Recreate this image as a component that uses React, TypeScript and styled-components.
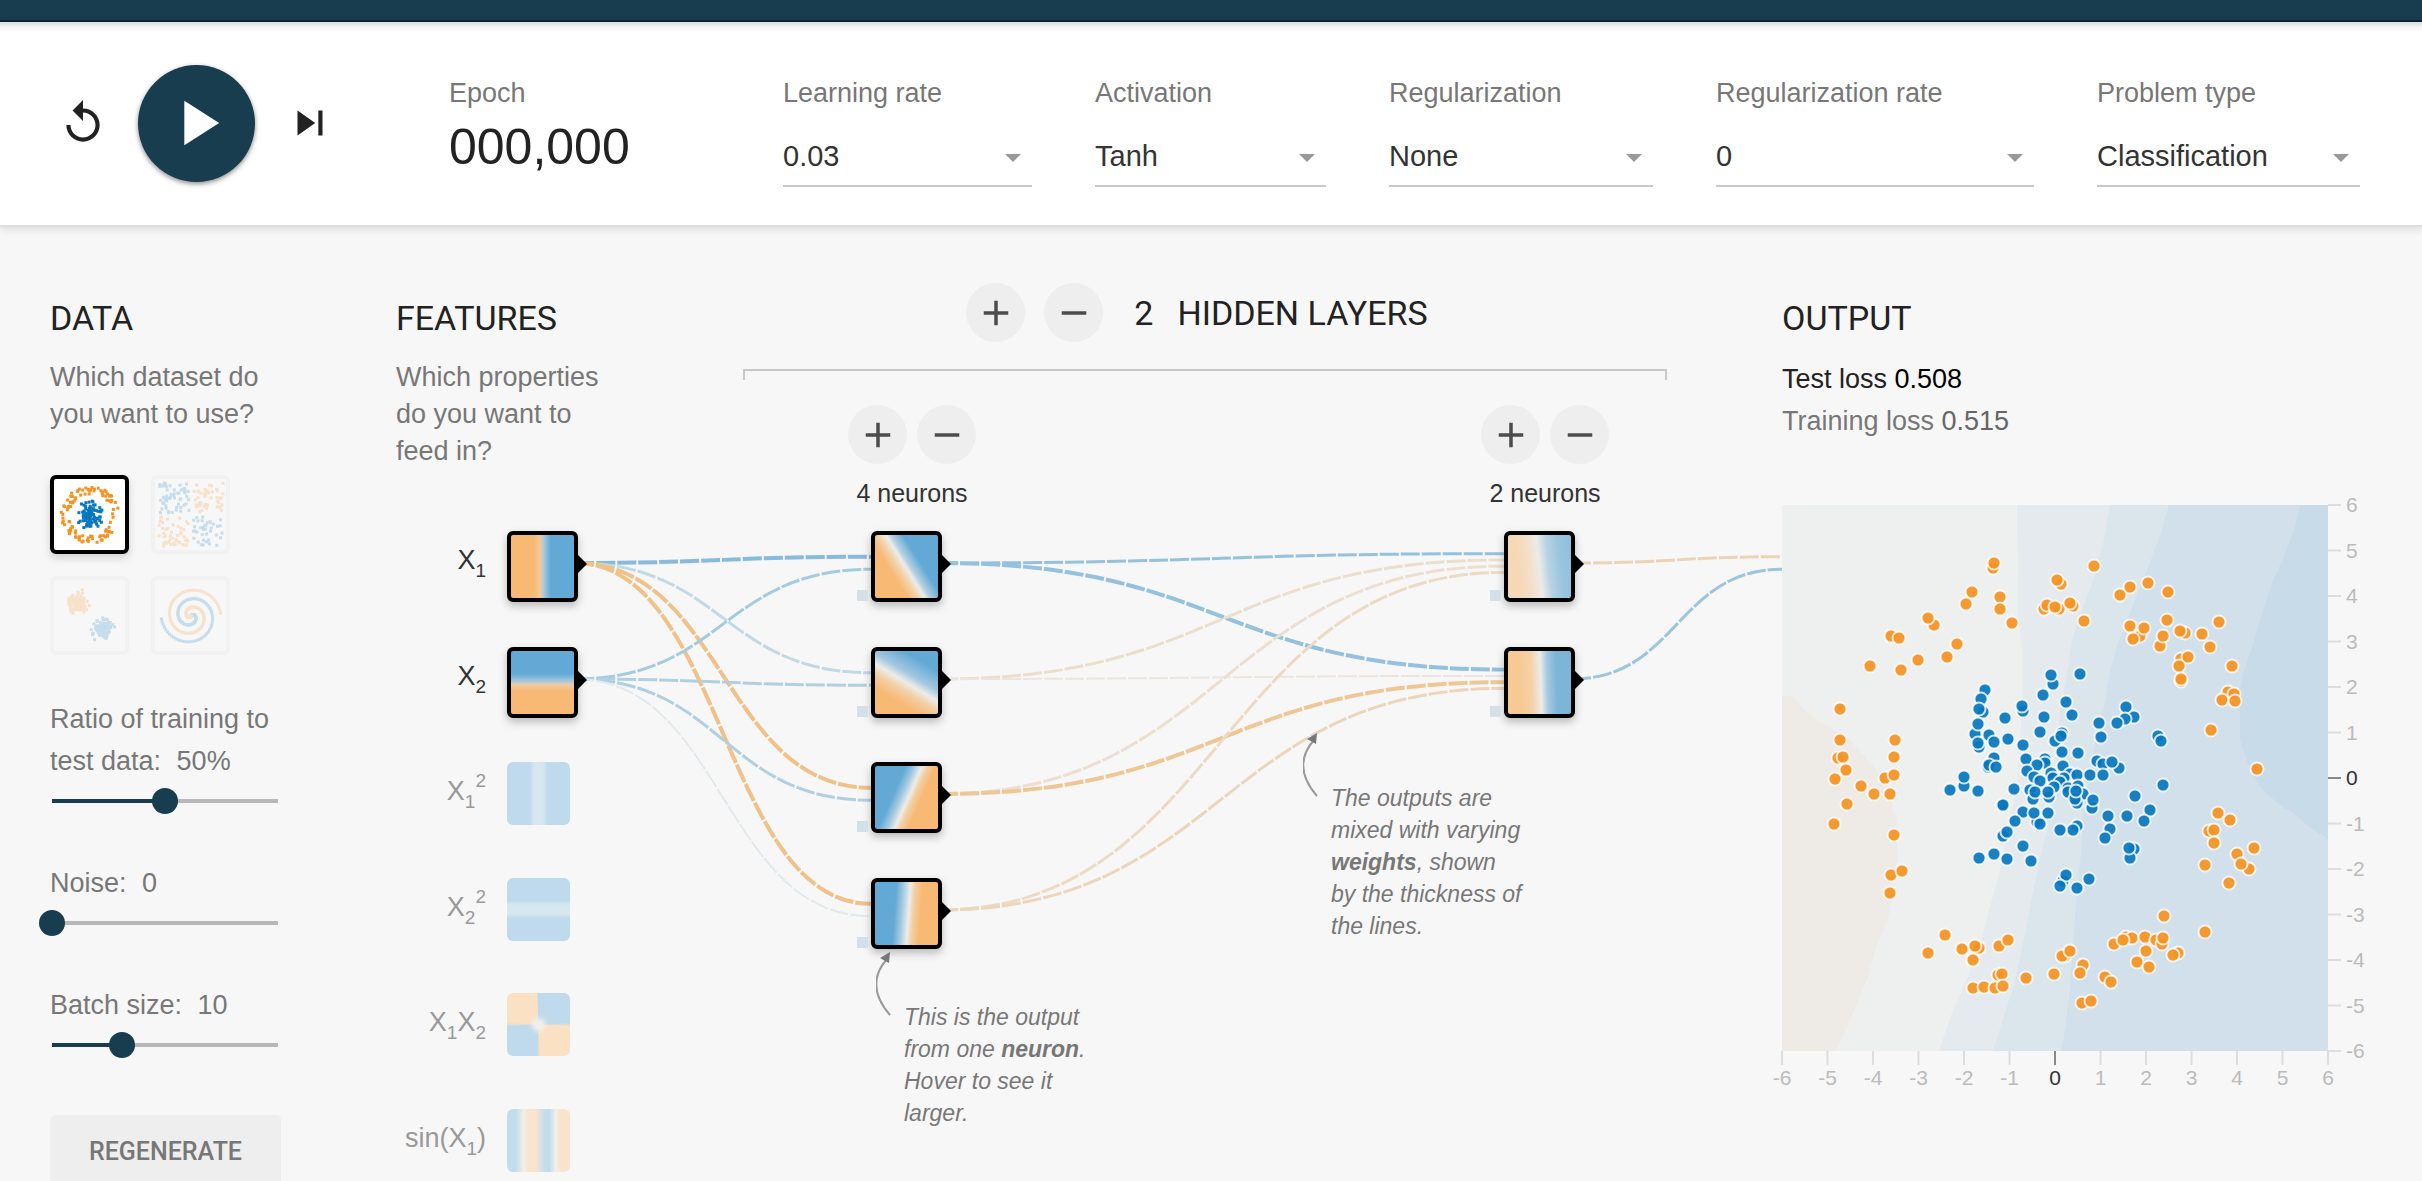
import React, { useLayoutEffect, useRef, useState } from "react";
import styled, { createGlobalStyle } from "styled-components";

const SANS = `"Liberation Sans", Arial, Helvetica, sans-serif`;
const ROBOTO = `Roboto, "Liberation Sans", sans-serif`;
const NAVY = "#183d4e";
const ORANGE = "#f7b974";
const BLUE = "#63a9d6";

const GlobalStyle = createGlobalStyle`
  *, *::before, *::after { box-sizing: border-box; }
  html, body { margin: 0; padding: 0; background: #f7f7f7; }
  body { font-family: ${SANS}; font-size: 27px; color: #222; }
  p, h2 { margin: 0; }
`;

const Page = styled.div`
  display: flex;
  flex-direction: column;
  height: 100vh;
  overflow: hidden;
`;

/* ---------- top bar and toolbar ---------- */

const TopBar = styled.header`
  flex: none;
  height: 22px;
  background: ${NAVY};
  border-bottom: 2px solid #0c2631;
`;

const Toolbar = styled.section`
  flex: none;
  position: relative;
  display: flex;
  align-items: flex-start;
  height: 205px;
  padding: 55px 62px 0 58px;
  background: linear-gradient(#dcdcdc, #f4f4f4 5px, #fff 10px);
  border-bottom: 2px solid #dddddd;
  box-shadow: 0 2px 8px rgba(0, 0, 0, 0.12);
`;

const Playback = styled.div`
  display: flex;
  align-items: center;
  gap: 30px;
  height: 92px;
`;

const IconButton = styled.button`
  display: flex;
  padding: 0;
  border: 0;
  background: none;
  color: #222;
`;

const PlayButton = styled(IconButton)`
  align-items: center;
  justify-content: center;
  width: 117px;
  height: 117px;
  border-radius: 50%;
  background: ${NAVY};
  color: #fff;
  box-shadow: 0 2px 5px rgba(0, 0, 0, 0.45);
`;

const Epoch = styled.div`
  display: flex;
  flex-direction: column;
  gap: 8px;
  width: 334px;
  margin-left: 114px;
`;

const FieldLabel = styled.label`
  color: #777;
  font-size: 27px;
  line-height: 32px;
  white-space: nowrap;
`;

const EpochValue = styled.output`
  font-size: 50px;
  line-height: 60px;
`;

const Fields = styled.div`
  flex: 1;
  display: grid;
  grid-template-columns: 249fr 231fr 264fr 318fr 263fr;
  column-gap: 63px;
`;

const Field = styled.div`
  display: flex;
  flex-direction: column;
  gap: 18px;
  min-width: 0;
`;

const SelectBox = styled.div`
  position: relative;
  border-bottom: 2px solid #c8c8c8;
`;

const Select = styled.select`
  display: block;
  width: 100%;
  height: 58px;
  padding: 0;
  border: 0;
  background: none;
  appearance: none;
  color: #333;
  font: 29px ${SANS};
`;

const Caret = styled.svg`
  position: absolute;
  top: 27px;
  right: 11px;
  pointer-events: none;
`;

/* ---------- page body ---------- */

const Main = styled.main`
  flex: 1;
  display: grid;
  grid-template-columns: 346px minmax(0, 1fr) 578px;
  padding: 56px 62px 0 50px;
`;

const Heading = styled.h2`
  font: 400 34px/40px ${ROBOTO};
  color: #222;
  text-transform: uppercase;
  white-space: nowrap;
`;

const Lead = styled.p`
  margin-top: 21px;
  color: #777;
  line-height: 37px;
`;

const DataColumn = styled.section`
  width: 231px;
  padding-top: 15px;
`;

const Datasets = styled.div`
  display: grid;
  grid-template-columns: 79px 79px;
  gap: 22px;
  margin: 42px 0 43px;
`;

const DatasetButton = styled.button<{ $active?: boolean }>`
  width: 79px;
  height: 79px;
  padding: 0;
  border: 4px solid ${(p) => (p.$active ? "#000" : "#f2f2f2")};
  border-radius: 6px;
  background: ${(p) => (p.$active ? "#fff" : "none")};
  box-shadow: ${(p) => (p.$active ? "0 4px 8px rgba(0, 0, 0, 0.15)" : "none")};

  svg {
    display: block;
    opacity: ${(p) => (p.$active ? 1 : 0.2)};
  }
`;

const SliderField = styled.div`
  display: flex;
  flex-direction: column;
  gap: 6px;
  margin-bottom: 48px;
`;

const SliderLabel = styled.label`
  color: #777;
  line-height: 42px;
`;

const SliderValue = styled.span`
  margin-left: 8px;
`;

const Range = styled.input<{ $fill: number }>`
  display: block;
  height: 26px;
  margin: 0 -10px 0 -11px;
  appearance: none;
  background: linear-gradient(
      to right,
      ${NAVY} ${(p) => p.$fill}%,
      #b8b8b8 ${(p) => p.$fill}%
    )
    center / calc(100% - 26px) 4px no-repeat;

  &::-webkit-slider-thumb {
    appearance: none;
    width: 26px;
    height: 26px;
    border-radius: 50%;
    background: ${NAVY};
  }
`;

const Regenerate = styled.button`
  width: 100%;
  height: 72px;
  margin-top: 9px;
  border: 0;
  border-radius: 5px;
  background: #eee;
  color: #777;
  font: 500 25px ${ROBOTO};
`;

/* ---------- network ---------- */

const NetworkColumn = styled.section`
  position: relative;
  display: flex;
  align-items: flex-start;
`;

const FeaturesIntro = styled.div`
  width: 220px;
  margin-right: 127px;
  padding-top: 15px;
`;

const HiddenIntro = styled.div`
  flex: 1;
  margin-right: 115px;
`;

const HiddenTitle = styled.div`
  display: flex;
  align-items: center;
  justify-content: center;
  padding-right: 16px;
  margin-bottom: 27px;
`;

const LayerCount = styled(Heading).attrs({ as: "span" })`
  margin: 0 24px 0 12px;
`;

const Bracket = styled.div`
  height: 11px;
  border: 2px solid #c8c8c8;
  border-bottom: 0;
`;

const RoundButton = styled.button`
  display: flex;
  align-items: center;
  justify-content: center;
  width: 59px;
  height: 59px;
  padding: 0;
  border: 0;
  border-radius: 50%;
  background: #eee;
  color: #4c4c4c;
`;

const TitleButton = styled(RoundButton)`
  margin-right: 19px;
`;

const Canvas = styled.div`
  position: absolute;
  inset: 0;
  pointer-events: none;

  button { pointer-events: auto; }
`;

const Links = styled.svg`
  position: absolute;
  inset: 0;
  width: 100%;
  height: 100%;
  overflow: visible;
`;

const Placed = styled.div`
  position: absolute;
`;

const FeatureItem = styled(Placed)<{ $active: boolean }>`
  left: 0;
  display: flex;
  gap: 21px;
  color: ${(p) => (p.$active ? "#333" : "#999")};
`;

const FeatureName = styled.span`
  width: 90px;
  line-height: 58px;
  text-align: right;
  white-space: nowrap;

  sub, sup { font-size: 19px; line-height: 0; }
  sub { vertical-align: -8px; }
  sup { vertical-align: 13px; }
`;

const Node = styled.button<{ $fill: string; $plain?: boolean }>`
  position: relative;
  flex: none;
  display: block;
  width: ${(p) => (p.$plain ? 63 : 71)}px;
  height: ${(p) => (p.$plain ? 63 : 71)}px;
  padding: 0;
  border: ${(p) => (p.$plain ? "0" : "4px solid #000")};
  border-radius: 6px;
  background: ${(p) => p.$fill};
  background-origin: padding-box;
  box-shadow: ${(p) => (p.$plain ? "none" : "0 4px 9px rgba(0, 0, 0, 0.25)")};
`;

const Arrow = styled.svg`
  position: absolute;
  top: 19px;
  left: 66px;
`;

const Bias = styled.span`
  position: absolute;
  top: 55px;
  left: -18px;
  width: 11px;
  height: 11px;
  background: #d3e0e7;
`;

const LayerControls = styled(Placed)`
  top: 122px;
  display: flex;
  flex-direction: column;
  align-items: center;
  width: 128px;
`;

const ButtonPair = styled.div`
  display: flex;
  gap: 10px;
`;

const NeuronCount = styled.span`
  margin-top: 14px;
  color: #333;
  font-size: 25px;
  line-height: 30px;
  white-space: nowrap;
`;

const Callout = styled(Placed)`
  display: flex;
`;

const CalloutText = styled.p`
  padding-top: 51px;
  color: #777;
  font-size: 23px;
  font-style: italic;
  line-height: 32px;
  white-space: nowrap;
`;

/* ---------- output ---------- */

const OutputColumn = styled.section`
  padding-top: 15px;
`;

const Losses = styled.div`
  margin: 20px 0 63px;
  line-height: 42px;
`;

const Loss = styled.p<{ $muted?: boolean }>`
  color: ${(p) => (p.$muted ? "#777" : "#222")};

  output { color: ${(p) => (p.$muted ? "#666" : "#000")}; }
`;

const Plot = styled.svg`
  display: block;
  overflow: visible;
  font-size: 21px;
`;

/* ---------- icons ---------- */

function Icon({ d, size }: { d: string; size: number }) {
  return (
    <svg width={size} height={size} viewBox="0 0 24 24" fill="currentColor" aria-hidden>
      <path d={d} />
    </svg>
  );
}

const REPLAY =
  "M12 5V1L7 6l5 5V7c3.31 0 6 2.69 6 6s-2.69 6-6 6-6-2.69-6-6H4c0 4.42 3.58 8 8 8s8-3.58 8-8-3.58-8-8-8z";
const PLAY = "M8 5v14l11-7z";
const SKIP = "M6 18l8.5-6L6 6v12zM16 6v12h2V6h-2z";
const ADD = "M19 13h-6v6h-2v-6H5v-2h6V5h2v6h6v2z";
const REMOVE = "M19 13H5v-2h14v2z";

/* ---------- dataset thumbnails ---------- */

type Dot = [number, number, string];
const DOT_BLUE = "#0877bd";
const DOT_ORANGE = "#f59322";

function seeded(seed: number) {
  let s = seed;
  return () => {
    s = (s * 16807) % 2147483647;
    return s / 2147483647;
  };
}

function circleDots(): Dot[] {
  const rnd = seeded(11);
  const dots: Dot[] = [];
  for (let i = 0; i < 100; i++) {
    const a = rnd() * Math.PI * 2;
    const r = rnd() * 14;
    dots.push([36 + r * Math.sin(a), 36 + r * Math.cos(a), DOT_BLUE]);
  }
  for (let i = 0; i < 100; i++) {
    const a = rnd() * Math.PI * 2;
    const r = 21 + rnd() * 8;
    dots.push([36 + r * Math.sin(a), 36 + r * Math.cos(a), DOT_ORANGE]);
  }
  return dots;
}

function xorDots(): Dot[] {
  const rnd = seeded(29);
  return Array.from({ length: 190 }, () => {
    const x = (rnd() - 0.5) * 60;
    const y = (rnd() - 0.5) * 60;
    const px = x + (x > 0 ? 2 : -2);
    const py = y + (y > 0 ? 2 : -2);
    return [36 + px, 36 + py, x * y > 0 ? DOT_BLUE : DOT_ORANGE] as Dot;
  });
}

function gaussDots(): Dot[] {
  const rnd = seeded(5);
  const spread = () => (rnd() + rnd() + rnd() - 1.5) * 10;
  const dots: Dot[] = [];
  for (let i = 0; i < 95; i++) dots.push([24 + spread(), 24 + spread(), DOT_ORANGE]);
  for (let i = 0; i < 95; i++) dots.push([49 + spread(), 48 + spread(), DOT_BLUE]);
  return dots;
}

function spiralDots(): Dot[] {
  const dots: Dot[] = [];
  [
    [0, DOT_BLUE],
    [Math.PI, DOT_ORANGE],
  ].forEach(([delta, color]) => {
    for (let i = 0; i < 110; i++) {
      const r = (i / 110) * 30;
      const t = 1.75 * (i / 110) * 2 * Math.PI + (delta as number);
      dots.push([36 + r * Math.sin(t), 36 - r * Math.cos(t), color as string]);
    }
  });
  return dots;
}

const DATASETS = [
  { name: "Circle", dots: circleDots(), active: true },
  { name: "Exclusive or", dots: xorDots(), active: false },
  { name: "Gaussian", dots: gaussDots(), active: false },
  { name: "Spiral", dots: spiralDots(), active: false },
];

function DatasetThumb({ dots }: { dots: Dot[] }) {
  return (
    <svg width="71" height="71" viewBox="0 0 71 71" aria-hidden>
      {dots.map(([x, y, c], i) => (
        <rect key={i} x={x - 1.5} y={y - 1.5} width="3" height="3" fill={c} />
      ))}
    </svg>
  );
}

/* ---------- network model ---------- */

const ROWS = [248, 364, 479, 595, 710, 826];

const FEATURES = [
  {
    name: <>X<sub>1</sub></>,
    label: "X1",
    active: true,
    fill: `linear-gradient(90deg, ${ORANGE} 36%, #f2c998 46%, #a9c8dc 52%, ${BLUE} 63%)`,
  },
  {
    name: <>X<sub>2</sub></>,
    label: "X2",
    active: true,
    fill: `linear-gradient(180deg, ${BLUE} 36%, #a5c8de 48%, #f0cba0 53%, ${ORANGE} 64%)`,
  },
  {
    name: <>X<sub>1</sub><sup>2</sup></>,
    label: "X1 squared",
    active: false,
    fill: "linear-gradient(90deg, #bfdaec 36%, #d6e7ef 43%, #d6e7ef 57%, #bfdaec 64%)",
  },
  {
    name: <>X<sub>2</sub><sup>2</sup></>,
    label: "X2 squared",
    active: false,
    fill: "linear-gradient(180deg, #bfdaec 36%, #d6e7ef 43%, #d6e7ef 57%, #bfdaec 64%)",
  },
  {
    name: <>X<sub>1</sub>X<sub>2</sub></>,
    label: "X1 times X2",
    active: false,
    fill:
      "radial-gradient(circle, #f0efec 3px, rgba(240,239,236,0) 10px), conic-gradient(#bfdaec 24%, #fae1c4 26%, #fae1c4 49%, #bfdaec 51%, #bfdaec 74%, #fae1c4 76%, #fae1c4 99%, #bfdaec)",
  },
  {
    name: <>sin(X<sub>1</sub>)</>,
    label: "sine of X1",
    active: false,
    fill:
      "linear-gradient(90deg, #c3dcec 14%, #f1eeea 26%, #f9e3ca 34%, #f7e4d0 46%, #c8deea 58%, #c1dbec 67%, #f1eeea 77%, #f9e3ca 86%)",
  },
];

const HIDDEN = [
  [
    `linear-gradient(58deg, ${ORANGE} 32%, #f3d3ac 42%, #ececea 49%, #b4d0e2 54%, ${BLUE} 66%)`,
    `linear-gradient(31deg, ${ORANGE} 26%, #f2cfa4 40%, #ececea 50%, #a3c8df 60%, ${BLUE} 80%)`,
    `linear-gradient(114deg, ${BLUE} 34%, #a6cae0 44%, #ececea 52%, #f3cfa2 58%, ${ORANGE} 67%)`,
    `linear-gradient(94deg, ${BLUE} 32%, #a6cae0 43%, #ececea 53%, #f3cfa2 60%, ${ORANGE} 71%)`,
  ],
  [
    "linear-gradient(84deg, #f5d8b8 20%, #f3dfc9 36%, #ecebe9 50%, #b9d3e3 63%, #9ac5df 80%, #8fbfdd 100%)",
    "linear-gradient(88deg, #f7c995 20%, #f5d2a8 38%, #ecebe9 52%, #a5cae0 62%, #7db5d9 76%)",
  ],
];

type Link = [number, number, string, number];

const LINKS: Link[][] = [
  [
    [0, 0, "#88badb", 4],
    [0, 1, "#c1d8e5", 3],
    [0, 2, "#f0c188", 4],
    [0, 3, "#f0c188", 4],
    [1, 0, "#a5cbe0", 3],
    [1, 1, "#b0d0e2", 3],
    [1, 2, "#b0d0e2", 3],
    [1, 3, "#e2e9ec", 2],
  ],
  [
    [0, 0, "#94c1dd", 3],
    [0, 1, "#94c1dd", 4],
    [1, 0, "#ebdecd", 3],
    [1, 1, "#ebe5de", 2],
    [2, 0, "#ecdfd0", 3],
    [2, 1, "#efc795", 4],
    [3, 0, "#ecdac3", 3],
    [3, 1, "#ecd6bb", 3],
  ],
  [
    [0, 0, "#ecd3b5", 3],
    [1, 0, "#9dc5de", 3],
  ],
];

const SOURCES = [2, 4, 2];

function linkPath(x1: number, x2: number, from: number, to: number, count: number) {
  const start = x1 + 68;
  const mid = (start + x2) / 2;
  const y1 = ROWS[from] + 32;
  const y2 = ROWS[to] + 32 + ((from - (count - 1) / 2) / count) * 25;
  return `M${start},${y1}C${mid},${y1} ${mid},${y2} ${x2},${y2}`;
}

function NodeArrow() {
  return (
    <Arrow width="10" height="20" viewBox="0 0 10 20" aria-hidden>
      <path d="M0 0L10 10L0 20z" />
    </Arrow>
  );
}

function CalloutArrow() {
  return (
    <svg width="28" height="72" viewBox="0 0 28 72" aria-hidden>
      <path d="M14 65Q-12 35 11 9" fill="none" stroke="#999" strokeWidth="2" />
      <path d="M14 2L4 8L13 13z" fill="#777" />
    </svg>
  );
}

function Network() {
  const ref = useRef<HTMLDivElement>(null);
  const [width, setWidth] = useState(1386);

  useLayoutEffect(() => {
    const measure = () => ref.current && setWidth(ref.current.clientWidth);
    measure();
    window.addEventListener("resize", measure);
    return () => window.removeEventListener("resize", measure);
  }, []);

  const first = 111;
  const span = width - first;
  const xs = [first, Math.round(first + span * 0.2855), Math.round(first + span * 0.782), width];

  return (
    <Canvas ref={ref}>
      <Links aria-hidden>
        {LINKS.map((group, layer) =>
          group.map(([from, to, color, w]) => (
            <path
              key={`${layer}-${from}-${to}`}
              d={linkPath(xs[layer], xs[layer + 1], from, to, SOURCES[layer])}
              fill="none"
              stroke={color}
              strokeWidth={w}
              strokeDasharray="19 2"
            />
          ))
        )}
      </Links>

      {FEATURES.map((f, i) => (
        <FeatureItem key={f.label} $active={f.active} style={{ top: ROWS[i] }}>
          <FeatureName>{f.name}</FeatureName>
          <Node $fill={f.fill} $plain={!f.active} aria-label={f.label}>
            {f.active && <NodeArrow />}
          </Node>
        </FeatureItem>
      ))}

      {HIDDEN.map((layer, l) => (
        <React.Fragment key={l}>
          <LayerControls style={{ left: xs[l + 1] - 23 }}>
            <ButtonPair>
              <RoundButton aria-label="Add neuron"><Icon d={ADD} size={42} /></RoundButton>
              <RoundButton aria-label="Remove neuron"><Icon d={REMOVE} size={42} /></RoundButton>
            </ButtonPair>
            <NeuronCount>{`${layer.length} neurons`}</NeuronCount>
          </LayerControls>
          {layer.map((fill, i) => (
            <Placed key={i} style={{ left: xs[l + 1], top: ROWS[i] }}>
              <Node $fill={fill} aria-label={`Layer ${l + 1} neuron ${i + 1}`}>
                <Bias />
                <NodeArrow />
              </Node>
            </Placed>
          ))}
        </React.Fragment>
      ))}

      <Callout style={{ left: xs[2] - 201, top: 448 }}>
        <CalloutArrow />
        <CalloutText>
          The outputs are<br />mixed with varying<br /><b>weights</b>, shown<br />
          by the thickness of<br />the lines.
        </CalloutText>
      </Callout>
      <Callout style={{ left: xs[1] + 5, top: 667 }}>
        <CalloutArrow />
        <CalloutText>
          This is the output<br />from one <b>neuron</b>.<br />Hover to see it<br />larger.
        </CalloutText>
      </Callout>
    </Canvas>
  );
}

/* ---------- output plot ---------- */

const BANDS: [string, string][] = [
  ["#edf0ef", "0,0 546,0 546,546 0,546"],
  [
    "#eeeae6",
    "0,190 11,192 22,205 46,222 66,233 79,248 92,262 100,275 110,288 111,305 115,315 115,355 110,392 105,418 94,442 86,472 75,498 65,522 54,546 0,546",
  ],
  [
    "#e5eaee",
    "235,0 236,108 240,142 240,208 236,258 235,282 227,315 222,345 217,370 206,408 200,432 185,475 170,508 157,546 546,546 546,0",
  ],
  [
    "#dbe6ec",
    "328,0 322,35 312,72 299,108 290,135 284,175 278,208 274,258 270,295 265,325 257,358 250,392 244,425 233,475 223,508 211,546 546,546 546,0",
  ],
  [
    "#d2e0eb",
    "387,0 379,28 366,62 350,102 337,135 328,165 322,202 312,242 307,275 301,308 299,348 294,398 291,442 287,492 283,525 279,546 546,546 546,0",
  ],
  [
    "#c8dbe9",
    "518,0 514,18 502,52 491,75 480,108 470,142 461,168 458,188 458,235 468,265 480,285 502,303 510,307 527,322 546,334 546,0",
  ],
];

const ORANGE_POINTS = [
  211,63, 212,58, 312,61, 279,79, 275,75, 190,87, 218,92, 184,99, 218,104, 262,104, 265,100, 277,104,
  273,102, 291,101, 288,98, 230,118, 302,116, 338,90, 348,82, 366,78, 386,87, 152,120, 146,113, 109,131,
  117,133, 175,139, 165,152, 136,155, 88,161, 119,165, 348,121, 358,131, 362,123, 351,134, 378,141,
  381,131, 385,115, 403,128, 398,126, 420,129, 437,117, 428,142, 399,154, 406,152, 397,161, 399,176,
  399,174, 450,161, 446,187, 452,189, 440,195, 453,196, 429,225, 475,264, 58,204, 58,235, 113,235,
  56,253, 61,252, 112,252, 64,265, 53,274, 103,273, 112,270, 79,281, 92,289, 108,289, 65,299, 52,319,
  112,330, 109,370, 120,366, 108,388, 436,308, 448,315, 427,326, 432,325, 432,338, 472,343, 455,349,
  467,364, 459,359, 423,360, 447,378, 382,411, 423,427, 344,432, 350,433, 332,439, 341,435, 363,432,
  374,435, 380,439, 381,433, 364,446, 396,448, 391,450, 355,457, 367,462, 163,430, 146,448, 180,444,
  197,443, 193,441, 191,455, 217,441, 226,435, 283,451, 280,451, 288,446, 301,460, 298,468, 272,469,
  244,473, 216,470, 220,469, 191,483, 202,482, 213,483, 221,481, 323,472, 329,477, 300,498, 309,496,
];

const BLUE_POINTS = [
  271,179, 269,170, 298,169, 203,185, 261,190, 199,194, 284,197, 241,206, 240,201, 344,202, 201,207,
  197,204, 290,210, 352,212, 262,212, 223,213, 343,214, 335,218, 317,218, 193,229, 196,219, 258,227,
  207,230, 280,228, 273,236, 279,231, 319,232, 376,231, 379,236, 226,234, 212,237, 197,242, 196,238,
  241,240, 280,247, 296,248, 244,254, 212,253, 263,254, 315,256, 321,259, 337,263, 330,257, 263,258,
  255,260, 206,262, 207,260, 214,262, 281,261, 245,266, 269,268, 288,269, 295,270, 308,270, 321,270,
  182,281, 182,272, 252,272, 282,273, 271,273, 258,276, 278,277, 168,285, 196,286, 232,284, 248,285,
  251,294, 253,287, 272,282, 267,292, 266,287, 286,283, 286,287, 296,281, 301,289, 295,298, 293,294,
  294,286, 310,303, 311,295, 381,280, 353,291, 220,300, 221,300, 368,305, 362,316, 345,311, 326,311,
  241,307, 255,317, 252,308, 266,308, 233,316, 258,319, 295,321, 291,325, 278,325, 328,324, 323,333,
  221,331, 225,327, 241,341, 352,344, 348,353, 347,343, 212,349, 225,354, 197,353, 249,356, 281,376,
  284,370, 278,381, 295,383, 307,374,
];

const TICKS = [-6, -5, -4, -3, -2, -1, 0, 1, 2, 3, 4, 5, 6];

function pairs(flat: number[]) {
  return flat.reduce<[number, number][]>((out, v, i) => {
    if (i % 2 === 0) out.push([v, flat[i + 1]]);
    return out;
  }, []);
}

function Dots({ points, color }: { points: number[]; color: string }) {
  return (
    <g fill={color} fillOpacity="0.92" stroke="#fff" strokeOpacity="0.8" strokeWidth="2">
      {pairs(points).map(([x, y], i) => (
        <circle key={i} cx={x} cy={y} r="6.5" />
      ))}
    </g>
  );
}

function OutputPlot() {
  return (
    <Plot width="578" height="590" role="img" aria-label="Model output over the data points">
      {BANDS.map(([color, points]) => (
        <polygon key={color} points={points} fill={color} />
      ))}
      <Dots points={ORANGE_POINTS} color={DOT_ORANGE} />
      <Dots points={BLUE_POINTS} color={DOT_BLUE} />
      {TICKS.map((t) => {
        const pos = 273 + t * 45.5;
        const up = 273 - t * 45.5;
        return (
          <g key={t} stroke={t === 0 ? "#888" : "#ddd"} strokeWidth="2">
            <path d={`M${pos},546v14M546,${up}h13`} />
            <g stroke="none" fill={t === 0 ? "#333" : "#bbb"}>
              <text x={pos} y="580" textAnchor="middle">{t}</text>
              <text x="564" y={up + 7}>{t}</text>
            </g>
          </g>
        );
      })}
    </Plot>
  );
}

/* ---------- page ---------- */

const SELECTS = [
  { id: "learning-rate", label: "Learning rate", value: "0.03" },
  { id: "activation", label: "Activation", value: "Tanh" },
  { id: "regularization", label: "Regularization", value: "None" },
  { id: "regularization-rate", label: "Regularization rate", value: "0" },
  { id: "problem-type", label: "Problem type", value: "Classification" },
];

const SLIDERS = [
  { id: "ratio", label: "Ratio of training to test data:", unit: "%", min: 10, max: 90, value: 50 },
  { id: "noise", label: "Noise:", unit: "", min: 0, max: 50, value: 0 },
  { id: "batch", label: "Batch size:", unit: "", min: 1, max: 30, value: 10 },
];

function Slider({ id, label, unit, min, max, value }: (typeof SLIDERS)[number]) {
  const [current, setCurrent] = useState(value);
  return (
    <SliderField>
      <SliderLabel htmlFor={id}>
        {label} <SliderValue>{`${current}${unit}`}</SliderValue>
      </SliderLabel>
      <Range
        id={id}
        type="range"
        min={min}
        max={max}
        value={current}
        $fill={((current - min) / (max - min)) * 100}
        onChange={(e) => setCurrent(Number(e.target.value))}
      />
    </SliderField>
  );
}

export default function App() {
  return (
    <Page>
      <GlobalStyle />
      <TopBar />
      <Toolbar>
        <Playback>
          <IconButton aria-label="Reset"><Icon d={REPLAY} size={50} /></IconButton>
          <PlayButton aria-label="Play"><Icon d={PLAY} size={76} /></PlayButton>
          <IconButton aria-label="Step"><Icon d={SKIP} size={50} /></IconButton>
        </Playback>
        <Epoch>
          <FieldLabel htmlFor="epoch">Epoch</FieldLabel>
          <EpochValue id="epoch">000,000</EpochValue>
        </Epoch>
        <Fields>
          {SELECTS.map((s) => (
            <Field key={s.id}>
              <FieldLabel htmlFor={s.id}>{s.label}</FieldLabel>
              <SelectBox>
                <Select id={s.id} defaultValue={s.value}>
                  <option>{s.value}</option>
                </Select>
                <Caret width="16" height="8" viewBox="0 0 16 8" aria-hidden>
                  <path d="M0 0h16l-8 8z" fill="#999" />
                </Caret>
              </SelectBox>
            </Field>
          ))}
        </Fields>
      </Toolbar>

      <Main>
        <DataColumn>
          <Heading>Data</Heading>
          <Lead>Which dataset do you want to use?</Lead>
          <Datasets>
            {DATASETS.map((d) => (
              <DatasetButton key={d.name} $active={d.active} aria-label={d.name}>
                <DatasetThumb dots={d.dots} />
              </DatasetButton>
            ))}
          </Datasets>
          {SLIDERS.map((s) => (
            <Slider key={s.id} {...s} />
          ))}
          <Regenerate>REGENERATE</Regenerate>
        </DataColumn>

        <NetworkColumn>
          <Network />
          <FeaturesIntro>
            <Heading>Features</Heading>
            <Lead>Which properties do you want to feed in?</Lead>
          </FeaturesIntro>
          <HiddenIntro>
            <HiddenTitle>
              <TitleButton aria-label="Add layer"><Icon d={ADD} size={42} /></TitleButton>
              <TitleButton aria-label="Remove layer"><Icon d={REMOVE} size={42} /></TitleButton>
              <LayerCount>2</LayerCount>
              <Heading>Hidden layers</Heading>
            </HiddenTitle>
            <Bracket />
          </HiddenIntro>
        </NetworkColumn>

        <OutputColumn>
          <Heading>Output</Heading>
          <Losses>
            <Loss>Test loss <output>0.508</output></Loss>
            <Loss $muted>Training loss <output>0.515</output></Loss>
          </Losses>
          <OutputPlot />
        </OutputColumn>
      </Main>
    </Page>
  );
}
